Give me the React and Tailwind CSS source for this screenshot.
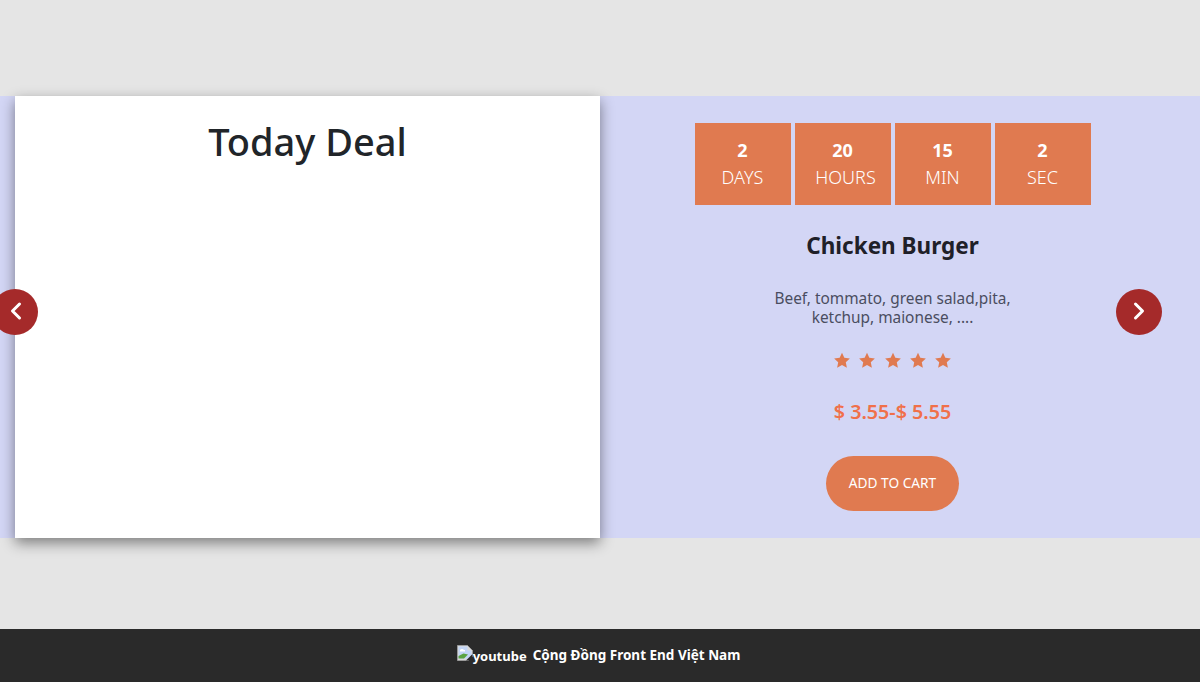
import React from 'react';
import { ChevronLeft, ChevronRight } from 'lucide-react';

const countdown = [
  { value: '2', label: 'DAYS', labelClass: '' },
  { value: '20', label: 'HOURS', labelClass: 'pl-[6px]' },
  { value: '15', label: 'MIN', labelClass: '' },
  { value: '2', label: 'SEC', labelClass: '' },
];

const Star = () => (
  <svg width="16" height="16" viewBox="0 0 24 23" className="fill-[#e07a50]">
    <path d="M12 0.5l3.5 7.6 8.3 1-6.1 5.7 1.6 8.2L12 18.9 4.700 23l1.600-8.200L0.200 9.100l8.300-1z" />
  </svg>
);

// Chrome's broken image placeholder
const BrokenImage = () => (
  <svg width="16" height="16" viewBox="0 0 16 16" className="shrink-0">
    <path d="M0.5 0.5h10l5 5v6l-4 4H0.5z" fill="#d8d8d8" stroke="#9a9a9a" />
    <path d="M1.5 1.5h9v4h4v5l-3 3H1.5z" fill="#c3d5f5" />
    <path d="M3 5c1-1.500 3-1.500 4 0h1v1.500H3z" fill="#fff" />
    <path d="M1.500 13.500V11l5-2.500 4.500 1-4 4z" fill="#5aa341" />
    <path d="M9 15.500l6.500-6.500v6.500z" fill="#2a2a2a" />
  </svg>
);

const App = () => (
  <div className="h-[682px] overflow-hidden flex flex-col bg-[#e5e5e5] font-['Noto_Sans','Open_Sans',sans-serif]">
    <div className="relative mt-24 h-[442px] bg-[#d3d6f5] px-[15px] flex">
      <button className="absolute left-[-8px] top-[193px] w-[46px] h-[46px] rounded-full bg-[#a52a2a] flex items-center justify-center text-white z-10">
        <ChevronLeft size={28} strokeWidth={2.6} className="ml-[1px] mb-[3px]" />
      </button>
      <button className="absolute left-[1116px] top-[193px] w-[46px] h-[46px] rounded-full bg-[#a52a2a] flex items-center justify-center text-white z-10">
        <ChevronRight size={28} strokeWidth={2.6} className="mb-[3px]" />
      </button>

      {/* Left card */}
      <div className="w-[585px] bg-white shadow-[0_5px_13px_rgba(0,0,0,0.45)] text-center pt-[17px]">
        <h1 className="text-[38px] leading-[56px] font-medium text-[#212529]">Today Deal</h1>
      </div>

      {/* Deal details */}
      <div className="w-[585px] flex flex-col items-center pt-[27px]">
        <div className="flex gap-1">
          {countdown.map((item) => (
            <div key={item.label} className="w-24 h-[82px] bg-[#e07a50] text-white flex flex-col items-center pt-[14px]">
              <span className="text-[18px] leading-[27px] font-bold">{item.value}</span>
              <span className={`text-[18px] leading-[27px] font-light ${item.labelClass}`}>{item.label}</span>
            </div>
          ))}
        </div>
        <h2 className="mt-[23px] text-[22.500px] leading-[36px] font-bold text-[#1f2028]">Chicken Burger</h2>
        <p className="mt-[25px] w-[260px] text-center text-[15.400px] leading-[19px] text-[#4a4d60]">
          Beef, tommato, green salad,pita, ketchup, maionese, ....
        </p>
        <div className="mt-[25px] flex gap-[9.400px]">
          <Star /><Star /><Star /><Star /><Star />
        </div>
        <div className="mt-[30px] text-[19.700px] leading-[28px] font-semibold text-[#f0704a]">$ 3.55-$ 5.55</div>
        <button className="mt-[30px] w-[133px] h-[55px] rounded-[28px] bg-[#e07a50] text-white text-[13.700px]">ADD TO CART</button>
      </div>
    </div>

    <div className="mt-auto h-[53px] bg-[#2a2a2a] flex items-center justify-center pr-[3px] text-white text-[13.500px] font-bold">
      <span className="flex items-start mr-[6px]">
        <BrokenImage />
        <span className="text-[13px] leading-[21px] mt-[1px]">youtube</span>
      </span>
      <span>Cộng Đồng Front End Việt Nam</span>
    </div>
  </div>
);

export default App;
